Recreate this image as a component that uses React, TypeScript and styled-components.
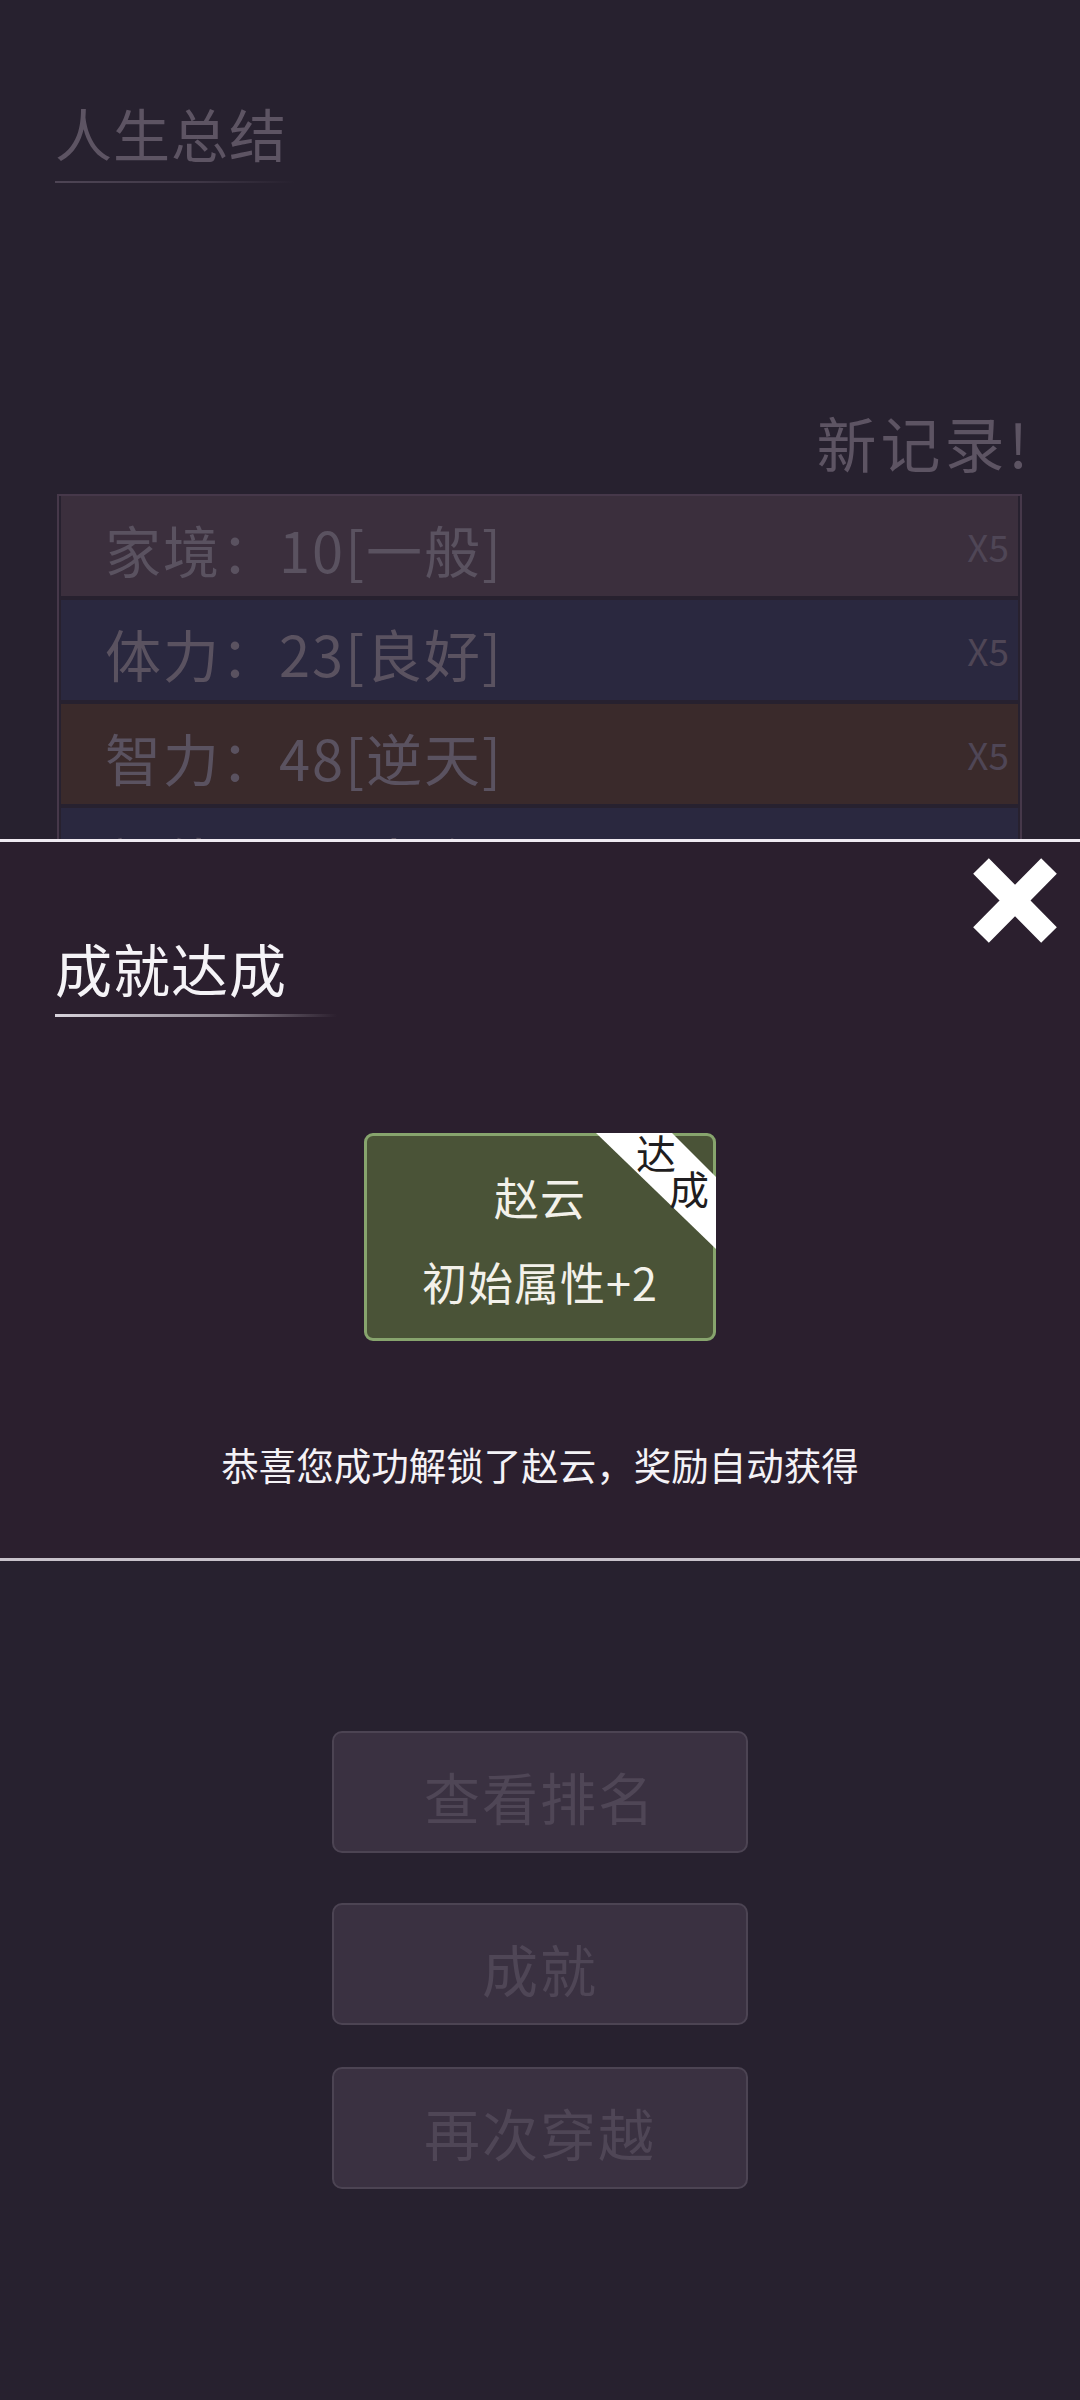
import styled, { createGlobalStyle } from "styled-components";

const GlobalStyle = createGlobalStyle`
  html, body {
    margin: 0;
    padding: 0;
    background: #27212f;
  }
  body {
    font-family: "Noto Sans CJK SC", "Noto Sans", sans-serif;
  }
  * {
    box-sizing: border-box;
  }
`;

const Screen = styled.div`
  position: relative;
  width: 1080px;
  min-height: 2400px;
  background: #27212f;
  overflow: hidden;
`;

const Heading = styled.div<{ $bright?: boolean; $top: number; $rule: number }>`
  display: flex;
  flex-direction: column;
  align-items: flex-start;
  margin-top: ${({ $top }) => $top}px;
  padding-left: 55px;

  h2 {
    margin: 0;
    font-size: 57px;
    line-height: 57px;
    font-weight: 400;
    letter-spacing: 1px;
    color: ${({ $bright }) => ($bright ? "#f5f3f7" : "#5d5463")};
  }

  &::after {
    content: "";
    display: block;
    margin-top: ${({ $bright }) => ($bright ? 18 : 20)}px;
    width: ${({ $rule }) => $rule}px;
    height: ${({ $bright }) => ($bright ? 3 : 2)}px;
    background: linear-gradient(
      90deg,
      ${({ $bright }) => ($bright ? "#d8d3dc" : "#4e4555")} 0%,
      ${({ $bright }) => ($bright ? "rgba(216,211,220,0.55)" : "rgba(78,69,85,0.6)")} 60%,
      transparent 100%
    );
  }
`;

const NewRecord = styled.div`
  margin: 229px 48px 0 0;
  text-align: right;
  font-size: 60px;
  line-height: 60px;
  letter-spacing: 4px;
  color: #5d5463;
`;

const AttrList = styled.ul`
  list-style: none;
  margin: 22px 58px 0 57px;
  padding: 0 2px;
  border: 2px solid #46384a;
  display: flex;
  flex-direction: column;
  gap: 4px;
`;

const AttrRow = styled.li<{ $bg: string }>`
  height: 100px;
  background: ${({ $bg }) => $bg};
  display: flex;
  align-items: center;
  justify-content: space-between;
  padding: 6px 9px 0 44px;
`;

const AttrText = styled.span`
  font-size: 56px;
  line-height: 56px;
  letter-spacing: 2px;
  color: #5a5260;
`;

const Multiplier = styled.span`
  font-size: 37px;
  color: #4f4656;
  margin-top: -6px;
`;

const ButtonStack = styled.div`
  display: flex;
  flex-direction: column;
  align-items: center;
  margin-top: 821px;
`;

const MenuButton = styled.button<{ $offset: number }>`
  width: 416px;
  height: 122px;
  margin-top: ${({ $offset }) => $offset}px;
  padding: 6px 0 0;
  background: #3a3141;
  border: 2px solid #4c4453;
  border-radius: 10px;
  font-family: inherit;
  font-size: 56px;
  letter-spacing: 2px;
  color: #4f4656;
`;

const Overlay = styled.div`
  position: absolute;
  left: 0;
  right: 0;
  top: 839px;
  height: 722px;
  background: #2b1f2e;
  border-top: 3px solid #efeaf1;
  border-bottom: 3px solid #c8c2cb;
  display: flex;
  flex-direction: column;
`;

const CloseButton = styled.button`
  position: absolute;
  top: 16px;
  right: 23px;
  width: 84px;
  height: 85px;
  padding: 0;
  border: 0;
  background: none;
  display: flex;
`;

const AchievementCard = styled.div`
  position: relative;
  align-self: center;
  width: 352px;
  height: 208px;
  margin-top: 116px;
  padding-top: 4px;
  background: #4a5337;
  border: 3px solid #87a46d;
  border-radius: 9px;
  display: flex;
  flex-direction: column;
  align-items: center;
  justify-content: center;
  gap: 40px;
  color: #f3f1ea;
  font-size: 45px;
  line-height: 45px;
  letter-spacing: 1px;
`;

const Ribbon = styled.div`
  position: absolute;
  top: -3px;
  right: -3px;
  width: 120px;
  height: 116px;

  &::before {
    content: "";
    position: absolute;
    inset: 0;
    background: #ffffff;
    clip-path: polygon(0 0, 76px 0, 120px 44px, 120px 116px);
  }
`;

const RibbonChars = styled.div`
  position: absolute;
  left: 40px;
  top: -1px;
  display: flex;
  flex-direction: column;
  font-size: 40px;
  line-height: 40px;
  letter-spacing: 0;
  color: #1f1d20;
`;

const RibbonChar = styled.span<{ $shift: number }>`
  margin-left: ${({ $shift }) => $shift}px;
  margin-top: ${({ $shift }) => ($shift ? -4 : 0)}px;
`;

const Message = styled.p`
  margin: 104px 0 0;
  text-align: center;
  font-size: 37.5px;
  line-height: 38px;
  color: #f4f2f6;
`;

const attrs = [
  { label: "家境：10[一般]", bg: "#3b2f3d" },
  { label: "体力：23[良好]", bg: "#2a283f" },
  { label: "智力：48[逆天]", bg: "#3a2a2b" },
  { label: "颜值：31[出众]", bg: "#2a283f" },
];

const buttons = [
  { label: "查看排名", offset: 0 },
  { label: "成就", offset: 50 },
  { label: "再次穿越", offset: 42 },
];

export default function App() {
  return (
    <Screen>
      <GlobalStyle />
      <Heading $top={104} $rule={240}>
        <h2>人生总结</h2>
      </Heading>
      <NewRecord>新记录!</NewRecord>
      <AttrList>
        {attrs.map((a) => (
          <AttrRow key={a.label} $bg={a.bg}>
            <AttrText>{a.label}</AttrText>
            <Multiplier>X5</Multiplier>
          </AttrRow>
        ))}
      </AttrList>
      <ButtonStack>
        {buttons.map((b) => (
          <MenuButton key={b.label} $offset={b.offset}>
            {b.label}
          </MenuButton>
        ))}
      </ButtonStack>

      <Overlay>
        <CloseButton aria-label="关闭">
          <svg width="84" height="85" viewBox="0 0 84 85">
            <path d="M8 8 L76 77 M76 8 L8 77" stroke="#ffffff" strokeWidth="22" fill="none" />
          </svg>
        </CloseButton>
        <Heading $bright $top={97} $rule={282}>
          <h2>成就达成</h2>
        </Heading>
        <AchievementCard>
          <span>赵云</span>
          <span>初始属性+2</span>
          <Ribbon>
            <RibbonChars>
              <RibbonChar $shift={0}>达</RibbonChar>
              <RibbonChar $shift={33}>成</RibbonChar>
            </RibbonChars>
          </Ribbon>
        </AchievementCard>
        <Message>恭喜您成功解锁了赵云，奖励自动获得</Message>
      </Overlay>
    </Screen>
  );
}
